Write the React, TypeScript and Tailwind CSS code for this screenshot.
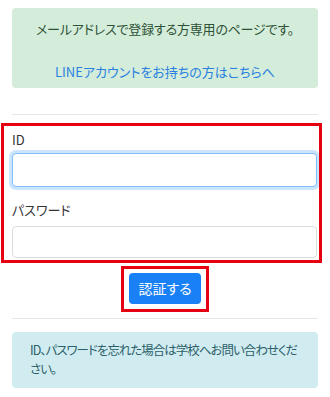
export default function App() {
  return (
    <div
      className="w-[330px] h-[397px] bg-white overflow-hidden text-[13px] [font-feature-settings:'palt'] text-[#333]"
      style={{ fontFamily: '"Noto Sans CJK JP", "Noto Sans", sans-serif' }}
    >
      <div className="pt-[8px] px-[12px]">
        {/* notice */}
        <div className="h-[80px] rounded-[4px] bg-[#d4edda] flex flex-col items-center pt-[12px]">
          <p className="leading-[18px] text-[#2e5237] tracking-[-0.2px]">
            メールアドレスで登録する方専用のページです。
          </p>
          <a className="mt-[25px] leading-[18px] text-[#2a7fe0] cursor-pointer">
            LINEアカウントをお持ちの方はこちらへ
          </a>
        </div>
        <div className="mt-[26px] h-px bg-[#e6e6e6]" />
      </div>

      {/* login form */}
      <div className="mt-[8px] ml-[1px] w-[321px] h-[140px] border-[3px] border-[#e50012] pl-[8px] pr-[2px] overflow-hidden">
        <label className="block mt-[4px] leading-[20px] text-[#333]">ID</label>
        <input
          type="text"
          className="block mt-[3px] w-full h-[34px] rounded-[4px] border border-[#80bdff] shadow-[0_0_0_3px_rgba(0,123,255,0.2)] outline-none bg-white"
        />
        <label className="block mt-[13px] leading-[20px] text-[#333]">
          パスワード
        </label>
        <input
          type="password"
          className="block mt-[6px] w-full h-[32px] rounded-[4px] border border-[#d9dde1] outline-none bg-white"
        />
      </div>

      <div className="mt-[3px] flex justify-center">
        <div className="border-[3px] border-[#e50012] pt-[4px] pb-[5px] px-[5px]">
          <button className="w-[72px] h-[31px] rounded-[4px] bg-[#1a80f5] text-white text-[14px]">
            認証する
          </button>
        </div>
      </div>

      <div className="px-[12px]">
        <div className="mt-[6px] h-px bg-[#e6e6e6]" />
        <div className="mt-[13px] h-[56px] rounded-[4px] bg-[#d1ecf1] pl-[18px] pr-[18px] pt-[8px] text-[12.5px] tracking-[-1px] leading-[19px] text-[#2c5f69]">
          ID、パスワードを忘れた場合は学校へお問い合わせください。
        </div>
      </div>
    </div>
  );
}
